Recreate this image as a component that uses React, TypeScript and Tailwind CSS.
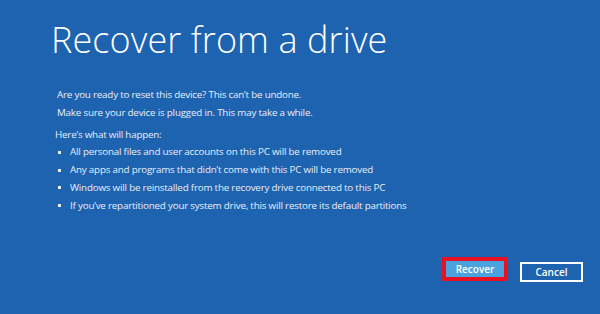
import React from 'react';

const bullets = [
  'All personal files and user accounts on this PC will be removed',
  'Any apps and programs that didn\u2019t come with this PC will be removed',
  'Windows will be reinstalled from the recovery drive connected to this PC',
  'If you\u2019ve repartitioned your system drive, this will restore its default partitions',
];

export default function App() {
  return (
    <div
      className="w-[600px] h-[314px] bg-[#1e63b0] text-white flex flex-col overflow-hidden"
      style={{ fontFamily: '"Open Sans", "Noto Sans", sans-serif' }}
    >
      {/* Title */}
      <h1 className="pl-[51px] pt-[16px] text-[36px] leading-[48px] font-light tracking-[0.1px]">
        Recover from a drive
      </h1>

      {/* Body */}
      <div className="pl-[55px] pt-[22px] text-[9.8px] leading-[17.8px] tracking-[-0.2px] text-[#e8eef8]">
        <p className="pl-[2px]">Are you ready to reset this device? This can&rsquo;t be undone.</p>
        <p className="pl-[2px]">Make sure your device is plugged in. This may take a while.</p>
        <p className="mt-[4px]">Here&rsquo;s what will happen:</p>
        <ul>
          {bullets.map((b) => (
            <li key={b} className="flex items-center">
              <span className="w-[3px] h-[3px] bg-[#e8eef8] ml-[3px] mr-[9px]" />
              {b}
            </li>
          ))}
        </ul>
      </div>

      {/* Buttons */}
      <div className="flex-1 flex items-end justify-end gap-[12px] pr-[17px] pb-[32px]">
        <div className="flex border-[4px] border-[#e81123] mb-[1px]">
          <button className="w-[58px] h-[16px] bg-[#4aa3df] text-[10px] font-semibold text-white leading-none">
            Recover
          </button>
        </div>
        <button className="w-[63px] h-[20px] border-2 border-white text-[10px] font-semibold text-white leading-none">
          Cancel
        </button>
      </div>
    </div>
  );
}
